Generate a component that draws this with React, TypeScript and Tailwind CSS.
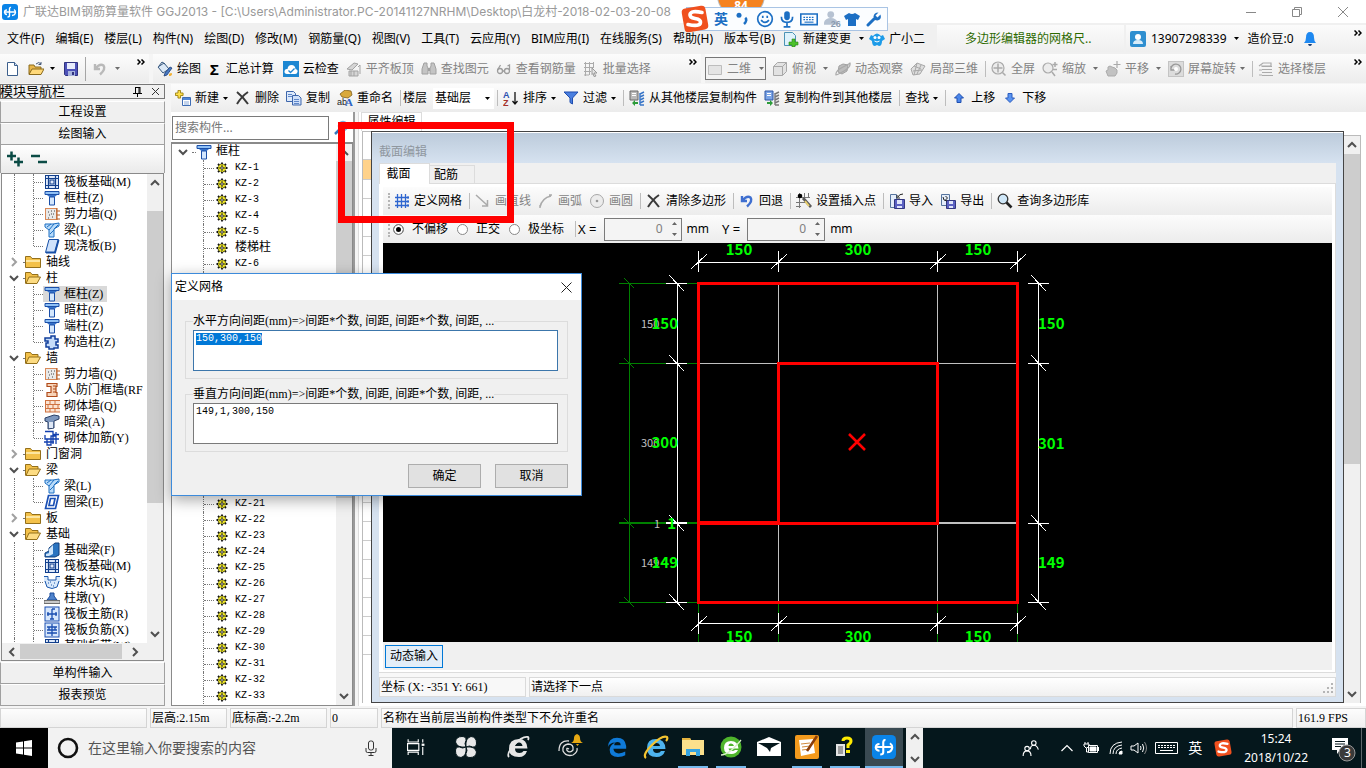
import { useState, type ReactNode } from "react";

const SONG = "font-['Liberation_Serif','Noto_Sans_CJK_SC',serif]";
const MONO = "font-['Liberation_Mono','Noto_Sans_CJK_SC',monospace]";

function Svg({
  children,
  size = 16,
  box = 16,
}: {
  children: ReactNode;
  size?: number;
  box?: number;
}) {
  return (
    <svg
      width={size}
      height={size}
      viewBox={`0 0 ${box} ${box}`}
      fill="none"
      className="shrink-0"
      aria-hidden="true"
    >
      {children}
    </svg>
  );
}

const icons: Record<string, ReactNode> = {
  logo: (
    <>
      <rect width="16" height="16" rx="3" fill="#0a84e8" />
      <path d="M2.500 8h11M9 3.500Q7.500 3 7.500 5v6.500q0 1.500-2 1.500M12 5.500q1.500 1 1.500 3-.5 3-3.500 3M5 6q-2.500 0-2.500 2.500Q3 10.500 5 10.500" stroke="#fff" strokeWidth="1.400" />
    </>
  ),
  file: (
    <>
      <path d="M2.500 1.500h7l3 3v10h-10z" fill="#fff" stroke="#3c5f8c" />
      <path d="M9.500 1.500v3h3" stroke="#3c5f8c" fill="#cfe0f5" />
    </>
  ),
  open: (
    <>
      <path d="M1 13V4h5l1 2h6v2" fill="#e8b64a" stroke="#8a6a1c" />
      <path d="M1 13.500L4 8h12l-3 5.500z" fill="#ffd97a" stroke="#8a6a1c" />
      <path d="M8 3q3-3 5 0m0-2v2.500h-2.500" stroke="#44597a" />
    </>
  ),
  save: (
    <>
      <path d="M1.500 1.500h13v13h-12l-1-1z" fill="#4d52b8" stroke="#30337f" />
      <path d="M4 2h8v6H4z" fill="#e7ecfb" />
      <path d="M5 10h7v5H5z" fill="#a8b4dd" />
      <path d="M9 11h2v3H9z" fill="#30337f" />
    </>
  ),
  undoGray: (
    <path d="M3 3v5h5M3.500 7.500Q8 2 11.500 4.500 14 8 8 13.500" stroke="#b9b9b9" strokeWidth="2.400" />
  ),
  undo: (
    <path d="M3 3v5h5M3.500 7.500Q8 2 11.500 4.500 14 8 8 13.500" stroke="#3f6fd0" strokeWidth="2.400" />
  ),
  paint: (
    <>
      <path d="M1 6l6-4 5 6-6 4z" fill="#dbe8f6" stroke="#35577f" />
      <path d="M2 5l3-4 3 2" stroke="#35577f" />
      <path d="M15 7l-5 7-3 1 1-3 5-6z" fill="#4679c4" stroke="#1f3f77" strokeWidth=".8" />
      <path d="M12 13q3-2 3 0t-3 2z" fill="#f2b134" />
    </>
  ),
  cloud: (
    <>
      <rect width="16" height="16" fill="#1d87d2" />
      <path d="M4 13q-3-.5-2.500-3Q2 7.500 4.500 8 5 4 8.500 4t4 4q2.500.5 2 3t-3 2z" fill="#fff" />
      <path d="M5.500 9.500l2 2 4-4" stroke="#1d87d2" strokeWidth="1.300" />
    </>
  ),
  flush: (
    <>
      <path d="M1 8l7-6 4 1-6 6zM3 10h9v5H3z" fill="#d5d5d5" stroke="#a3a3a3" />
      <path d="M5 10v5M8 10v5M12 6l2-2v9" stroke="#a3a3a3" />
    </>
  ),
  binoculars: (
    <>
      <path d="M3 2h3v3l1 2v6H1V8zM10 2h3l2 6v5H9V7l1-2z" fill="#c4c4c4" stroke="#a0a0a0" />
      <path d="M7 7h2v3H7z" fill="#a0a0a0" />
    </>
  ),
  glasses: (
    <>
      <circle cx="4" cy="10" r="2.500" stroke="#9c9c9c" strokeWidth="1.300" />
      <circle cx="11" cy="10" r="2.500" stroke="#9c9c9c" strokeWidth="1.300" />
      <path d="M6.500 10h2M1.500 9l3-5M13.500 9V4l-2 1" stroke="#9c9c9c" strokeWidth="1.300" />
    </>
  ),
  batch: (
    <>
      <path d="M1 2.500h10M1 6.500h10M1 10.500h7M1 14h5M2.500 1v14M6.500 1v13M10.500 1v6" stroke="#ababab" />
      <path d="M9 7l5 5h-3l2 3-2 .5-1-3-1 1z" fill="#e4e4e4" stroke="#999" />
    </>
  ),
  plate: <path d="M1.500 4.500h13v9h-13z" fill="#e4e4e4" stroke="#bdbdbd" />,
  cube: (
    <>
      <path d="M1.500 5.500l4-4h9v9l-4 4h-9z" fill="#e2e2e2" stroke="#a8a8a8" />
      <path d="M1.500 5.500h9v9M10.500 5.500l4-4" stroke="#a8a8a8" />
    </>
  ),
  orbit: (
    <>
      <path d="M4 5l4-2 5 1-1 6-5 3-4-2z" fill="#bdbdbd" stroke="#a1a1a1" />
      <path d="M1 14Q0 10 8 6t7-4q1 4-6 8t-8 4z" stroke="#a9a9a9" strokeWidth="1.200" />
    </>
  ),
  box3d: (
    <>
      <path d="M1 8l6-6 8 3-5 8-7 1z" fill="#dedede" stroke="#a8a8a8" />
      <path d="M4 5l7 3M3 10l9-1M7 2l-3 12M11 4L7 13" stroke="#a8a8a8" />
    </>
  ),
  fullscreen: (
    <>
      <circle cx="7" cy="7" r="6" fill="#ececec" stroke="#aaa" strokeWidth="1.200" />
      <path d="M7 2.500v9M2.500 7h9M11.500 11.500l3 3" stroke="#aaa" strokeWidth="1.500" />
    </>
  ),
  zoom: (
    <>
      <circle cx="6" cy="7" r="5" fill="#ececec" stroke="#aaa" strokeWidth="1.200" />
      <path d="M10 11l3 4M13 1v5M10.500 3.500h5M11 8.500h4" stroke="#aaa" strokeWidth="1.500" />
    </>
  ),
  pan: (
    <>
      <path d="M3 15l-2-5 2-1V6l2-1 2 1 3 1 2 2v3l-2 3z" fill="#c2c2c2" stroke="#ababab" />
      <path d="M12 0v7M8.500 3.500h7" stroke="#aaa" strokeWidth="1.200" />
    </>
  ),
  rotate: (
    <>
      <rect x=".5" y=".5" width="15" height="15" fill="#dcdcdc" stroke="#c4c4c4" />
      <path d="M3 9a5 5 0 1 1 4 4M3 5v4h4" stroke="#999" strokeWidth="1.300" />
      <circle cx="8" cy="8" r="2" fill="#fff" />
    </>
  ),
  floors: (
    <path d="M1 5l4-3h8v3H3M4 5.500h10M4 8.500h10M4 11.500h10M4 14.500h11M1 9h3M1 14h3" stroke="#ababab" strokeWidth="1.200" />
  ),
  create: (
    <>
      <path d="M3.500.5h3v3h3v3h-3v3h-3v-3h-3v-3h3z" transform="scale(.85)" fill="#ffe14d" stroke="#967a08" />
      <path d="M7.500 7.500h8v8h-8z" fill="#fff" stroke="#3f6db5" />
      <path d="M8 8h7v2H8z" fill="#4f86d8" />
      <path d="M9 12h5M9 14h5" stroke="#8aa9d8" />
    </>
  ),
  cross: (
    <path d="M2 2q6 5 11 12M13 2Q7 6 2 14" stroke="#3a3a3a" strokeWidth="2" />
  ),
  copy: (
    <>
      <path d="M.5 1.500h7l2 2v8h-9z" fill="#dce9fb" stroke="#3e66ab" />
      <path d="M6.500 5.500h6l2.500 2.500v7H6.500z" fill="#cfe0fa" stroke="#3e66ab" />
      <path d="M2 4.500h4M2 6.500h4M8 9.500h5M8 11.500h5M8 13.500h5" stroke="#5f87c9" />
    </>
  ),
  rename: (
    <>
      <path d="M3 4l5-4 6 1 1 4-4 3-6-1z" fill="#d9a93c" stroke="#80601a" strokeWidth=".8" />
      <text x="0" y="15" fontSize="9" fill="#222" fontFamily="Liberation Sans">ab</text>
      <text x="8" y="15.500" fontSize="11" fontWeight="700" fill="#2f64c4" fontFamily="Liberation Serif">A</text>
    </>
  ),
  sort: (
    <>
      <text x="0" y="8" fontSize="9" fontWeight="700" fill="#2b50b0" fontFamily="Liberation Sans">A</text>
      <text x="0" y="16" fontSize="9" fontWeight="700" fill="#a4312b" fontFamily="Liberation Sans">Z</text>
      <path d="M12 2v12M9.500 11l2.500 3 2.500-3" stroke="#111" strokeWidth="1.300" />
    </>
  ),
  filter: (
    <path d="M1 2h14L9.500 8v6L7 12.500V8z" fill="#4a7fe0" stroke="#1f4dae" />
  ),
  copyFrom: (
    <>
      <path d="M1 1h8v9H1z" fill="#b9b9b9" stroke="#6b6b6b" />
      <path d="M3 3.500h4M3 5.500h4" stroke="#fff" />
      <path d="M11 4l4-2M11 7l4-2M11 10l4-2M11 13l4-2M11 15h4M11 3v12" stroke="#3875c7" strokeWidth="1.400" />
      <path d="M3 13l3-3v2h3v2H6v2z" fill="#2c9c3a" />
    </>
  ),
  copyTo: (
    <>
      <path d="M1 1h8v9H1z" fill="#7aa4e6" stroke="#2e57a4" />
      <path d="M3 3.500h4M3 5.500h4" stroke="#fff" />
      <path d="M11 4l4-2M11 7l4-2M11 10l4-2M11 13l4-2M11 15h4M11 3v12" stroke="#777" strokeWidth="1.400" />
      <path d="M9 13l-3-3v2H3v2h3v2z" fill="#2c9c3a" />
    </>
  ),
  up: <path d="M8 3.500L12.500 8H10v4.500H6V8H3.500z" fill="#4a86ea" stroke="#1f4fb0" />,
  down: <path d="M8 12.500L12.500 8H10V3.500H6V8H3.500z" fill="#5a94f0" stroke="#2b5cc0" />,
  grid: (
    <>
      <path d="M1 4.500h14M1 8.500h14M1 12.500h14M3.500 1v14M7.500 1v14M11.500 1v14" stroke="#2f66cf" strokeWidth="1.300" />
      <path d="M14 3v3M14 7v3M14 11v3" stroke="#2f66cf" />
    </>
  ),
  line: <path d="M1 2l11 10M12.500 7v6H7" stroke="#aaa" strokeWidth="1.500" />,
  arc: <path d="M2 14Q4 5 13 3M2 12v3M11 2h3" stroke="#aaa" strokeWidth="1.500" />,
  circle: (
    <>
      <circle cx="8" cy="8" r="6.500" fill="#ececec" stroke="#a8a8a8" />
      <circle cx="8" cy="8" r="1.300" fill="#999" />
    </>
  ),
  insert: (
    <>
      <path d="M0 4.500h14M0 9.500h9M0 13.500h5M3.500 0v15M8.500 0v10M12.500 0v5" stroke="#777" />
      <circle cx="4" cy="3" r="2.300" fill="#000" />
      <path d="M7 5l8 9" stroke="#5a5a5a" strokeWidth="2.800" />
      <path d="M9 8l4 5" stroke="#e9cf6d" strokeWidth="2" />
    </>
  ),
  importDoc: (
    <>
      <path d="M1.500 1.500h6v13h-6z" fill="#e4edfa" stroke="#56749e" />
      <path d="M5.500 6.500h10v9h-10z" fill="#5b61c2" stroke="#32367f" />
      <path d="M8 7h5v4H8zM8 13h5v2H8z" fill="#dfe5fa" />
      <path d="M14 1q-4 0-5 3M8 2v3h3" stroke="#222" />
    </>
  ),
  exportDoc: (
    <>
      <path d="M1.500 1.500h8v11h-8z" fill="#e4edfa" stroke="#56749e" />
      <path d="M6.500 7.500h9v8h-9z" fill="#5b61c2" stroke="#32367f" />
      <path d="M9 8h4v3H9zM9 13h4v2H9z" fill="#dfe5fa" />
      <path d="M3 4q0 4 4 4M5.500 3l2 2-2 2" stroke="#222" />
    </>
  ),
  search: (
    <>
      <circle cx="6" cy="6" r="4.800" fill="#cfe7f8" stroke="#333" strokeWidth="1.300" />
      <path d="M9.500 9.500l5 5" stroke="#222" strokeWidth="2.600" />
    </>
  ),
  user: (
    <>
      <rect width="16" height="16" rx="2" fill="#2f8fd0" />
      <circle cx="8" cy="6" r="3" fill="#fff" />
      <path d="M3 13q0-4 5-4t5 4z" fill="#d8ecf9" />
    </>
  ),
  bell: (
    <>
      <path d="M8 1q4 0 4 5.500Q12 10 14 12H2q2-2 2-5.500Q4 1 8 1z" fill="#1e88f0" />
      <path d="M6 13h4q-.5 2-2 2t-2-2z" fill="#163b73" />
    </>
  ),
  change: (
    <>
      <path d="M1.500 1.500h8l3 3v10h-11z" fill="#dff2fb" stroke="#4c93b5" />
      <path d="M9 8h3v3h3v3h-3v2H9v-2H6v-3h3z" fill="#4cc02c" stroke="#2c8415" strokeWidth=".6" />
    </>
  ),
  mascot: (
    <>
      <path d="M2 4L0 8l3 2q0 5 3 5l2-1 2 1q3 0 3-5l3-2-2-4-2 1Q8 0 4 5z" fill="#1d9be8" />
      <circle cx="6" cy="6.500" r="1.500" fill="#fff" />
      <circle cx="10" cy="6.500" r="1.500" fill="#fff" />
      <path d="M5.500 10q2.500 2 5 0" stroke="#fff" />
    </>
  ),
  column: (
    <>
      <path d="M1 1.500h14v3H1z" fill="#8fc0f5" stroke="#1b4fa8" />
      <path d="M3 5h10l-2.500 2h-5z" fill="#3672c9" />
      <path d="M5.500 7h5v8h-5z" fill="#d4e7fd" stroke="#1b4fa8" />
    </>
  ),
  raft: (
    <>
      <rect x="1.500" y="1.500" width="13" height="13" fill="#dfeafb" stroke="#123f8c" />
      <path d="M4.500 1v14M11.500 1v14M1 4.500h14M1 11.500h14" stroke="#123f8c" strokeWidth="1.200" />
      <rect x="6" y="6" width="4" height="4" stroke="#123f8c" />
    </>
  ),
  shear: (
    <>
      <rect x="1.500" y="2.500" width="11" height="11" fill="#e9e9e9" stroke="#d98a5a" />
      <path d="M4 6h1M7 5h1M9 8h1M5 9h1M8 11h1M4 12h1M10 5h1M7 8h1" stroke="#444" />
      <path d="M13 2v12M13 5h3M13 9h3M13 13h3" stroke="#b55a22" />
    </>
  ),
  beam: (
    <>
      <path d="M1 2h8l6-1v3l-5 3v8H5V8L1 5z" fill="#b8dbfa" stroke="#1d6fc2" />
      <path d="M5 8l5-6M6 12l4-4M3 5l4-3M10 7l4-4" stroke="#1d6fc2" />
    </>
  ),
  slab: (
    <>
      <path d="M5 1.500h9.500L11 14.500H1.500z" fill="#cfe2fb" stroke="#174fa6" />
      <path d="M14.500 2L11 14.500H2" stroke="#174fa6" strokeWidth="2" />
    </>
  ),
  tie: (
    <path d="M4 4h3V2h4v3h3v3h-2v3h2v3h-4v1H5v-2H2V9h2V7H1V4z" fill="#c6dcfa" stroke="#123f9c" strokeWidth="1.500" />
  ),
  rfwall: (
    <path d="M3 1.500h10v3h-1v6h1v4H3v-4h4v-6H3zM9 4h3M9 7h3M9 10h3" fill="#f7d3b8" stroke="#b04c1b" strokeWidth="1.200" />
  ),
  brick: (
    <>
      <rect x="1" y="2" width="15" height="12" fill="#fbe4d3" />
      <path d="M1 2.500h15M1 6.500h15M1 10.500h15M1 14h15M1.500 2v12M6 2v4M11 2v4M4 6v4M9 6v4M14 6v4M6 10v4M11 10v4" stroke="#cf7240" />
    </>
  ),
  darkBeam: (
    <>
      <path d="M1 4l9-3 5 1v3l-5 2v7l-6 1V8L1 7z" fill="#7d97be" stroke="#2b3f66" />
      <path d="M5 8h4v6H5z" fill="#dfe8f6" />
    </>
  ),
  masonry: (
    <path d="M1 1.500h8v3h6M1 5v4h14M3 9v6h4V6h5v8M0 12h10M12 2v5M9 2v12" stroke="#123fae" strokeWidth="1.300" />
  ),
  ringBeam: (
    <path d="M4.500 1.500h10l-3 13h-10zM6.500 4.500h4.500l-1.500 7H5z" fill="#fff" stroke="#1b50b5" strokeWidth="1.700" />
  ),
  foundBeam: (
    <>
      <path d="M1 15v-4l4-2V6l6-5h4v12l-4 2z" fill="#2b74c0" stroke="#123f7c" />
      <path d="M5 7l4-4v9l-4 2zM2 12l3-1v3H2z" fill="#cfe6fb" />
    </>
  ),
  pit: (
    <>
      <path d="M0 2h4v4h8V2h4v5l-3 6q-5 3-10 0L0 7z" fill="#d9e9fb" />
      <path d="M0 2.500h4V6M16 2.500h-4V6M4 6h8M1 7l2 6q5 3 10 0l2-6M4 9h1M7 11h1M10 9h1M6 8h1M9 12h1" stroke="#1c58ad" />
    </>
  ),
  pier: (
    <>
      <path d="M6 3h4v3l3 4H3l3-4z" fill="#4f83cc" stroke="#1c4c9a" />
      <path d="M0 10.500h16v3H0z" fill="#c9c9c9" stroke="#6e6e6e" />
    </>
  ),
  mainBar: (
    <>
      <rect x="1" y="1" width="14" height="14" fill="#d7e7fc" stroke="#1a4eb0" />
      <path d="M3 8h10M8 3v10M4 6v4M12 6v4M6 13h4M8 3h3" stroke="#1a4eb0" strokeWidth="1.300" />
    </>
  ),
  negBar: (
    <>
      <rect x="1" y="1" width="14" height="14" fill="#d7e7fc" stroke="#1a4eb0" />
      <path d="M3 5h10M3 11h10M8 2v12M5 5v3M11 5v3M3 8h10" stroke="#1a4eb0" strokeWidth="1.300" />
    </>
  ),
  folder: (
    <>
      <path d="M.5 13.500v-11h5l1.500 2h8.500v9z" fill="#f3c14a" stroke="#94701b" />
      <path d="M1 6h14v2H1z" fill="#fde6a0" />
    </>
  ),
  folderOpen: (
    <>
      <path d="M.5 13.500v-11h5l1.500 2h6v3" fill="#f3c14a" stroke="#94701b" />
      <path d="M1 13.500L4 7h11.500L12 13.500z" fill="#fddc83" stroke="#94701b" />
    </>
  ),
  gear: (
    <>
      <path d="M8 2.500v11M2.500 8h11M4 4l8 8M12 4l-8 8" stroke="#111" strokeWidth="1.800" />
      <circle cx="8" cy="8" r="4" fill="#f0e820" stroke="#111" strokeDasharray="1 1" />
      <path d="M8 5v6M5 8h6" stroke="#333" />
      <circle cx="8" cy="8" r="1.200" fill="#fff" stroke="#222" strokeWidth=".8" />
    </>
  ),
};

function Icon({ name, size }: { name: string; size?: number }) {
  return <Svg size={size}>{icons[name]}</Svg>;
}

function Caret({ gray }: { gray?: boolean }) {
  return (
    <svg width="5" height="3" viewBox="0 0 5 3" className="shrink-0">
      <path d="M0 0h5L2.500 3z" fill={gray ? "#6d6d6d" : "#000"} />
    </svg>
  );
}

function Chevron({ dir, light }: { dir: "up" | "down" | "left" | "right"; light?: boolean }) {
  const paths = {
    up: "M1 7l4-4 4 4",
    down: "M1 3l4 4 4-4",
    left: "M7 1L3 5l4 4",
    right: "M3 1l4 4-4 4",
  };
  return (
    <svg width="10" height="10" viewBox="0 0 10 10" fill="none" className="shrink-0">
      <path d={paths[dir]} stroke={light ? "#a0a0a0" : "#505050"} strokeWidth="2" />
    </svg>
  );
}

function More() {
  return (
    <svg width="8" height="6" viewBox="0 0 8 6" fill="none" className="mt-[5px] shrink-0 self-start">
      <path d="M.5.5L3 3 .5 5.500M4.500.5L7 3 4.500 5.500" stroke="#000" strokeWidth="1.500" />
    </svg>
  );
}

function Sep() {
  return <span className="-mr-[2px] h-4 w-px shrink-0 bg-[#bdbdbd]" />;
}

function Tool({
  icon,
  label,
  caret,
  gray,
}: {
  icon?: string;
  label?: string;
  caret?: boolean;
  gray?: boolean;
}) {
  return (
    <button
      className={`flex shrink-0 items-center gap-1 whitespace-nowrap ${gray ? "text-[#838383]" : "text-black"}`}
      aria-label={label ?? icon}
    >
      {icon && <Icon name={icon} />}
      {label}
      {caret && <Caret gray={gray} />}
    </button>
  );
}

function ScrollBar({ before, thumb }: { before: string; thumb: string }) {
  return (
    <div className="flex w-4 shrink-0 flex-col items-center bg-[#f0f0f0]">
      <span className={`flex shrink-0 items-center justify-center ${before}`}>
        <Chevron dir="up" />
      </span>
      <span className={`w-full bg-[#cdcdcd] ${thumb}`} />
      <span className="flex-1" />
      <span className="pb-1">
        <Chevron dir="down" />
      </span>
    </div>
  );
}

const menus = [
  "文件(F)",
  "编辑(E)",
  "楼层(L)",
  "构件(N)",
  "绘图(D)",
  "修改(M)",
  "钢筋量(Q)",
  "视图(V)",
  "工具(T)",
  "云应用(Y)",
  "BIM应用(I)",
  "在线服务(S)",
  "帮助(H)",
  "版本号(B)",
];

function TitleBar() {
  return (
    <header className="flex h-[23px] shrink-0 items-center bg-white pl-[2px] text-[#999]">
      <Icon name="logo" />
      <h1 className="ml-[5px] min-w-0 flex-1 truncate font-['Inter','Noto_Sans_CJK_SC',sans-serif] text-[12px]">
        广联达BIM钢筋算量软件 GGJ2013 - [C:\Users\Administrator.PC-20141127NRHM\Desktop\白龙村-2018-02-03-20-08
      </h1>
      <button className="flex w-[46px] justify-center" aria-label="最小化">
        <svg width="10" height="10" fill="none" stroke="#888">
          <path d="M0 5.500h10" />
        </svg>
      </button>
      <button className="flex w-[46px] justify-center" aria-label="还原">
        <svg width="10" height="10" fill="none" stroke="#888">
          <path d="M.5 2.500h7v7h-7zM2.500 2.500v-2h7v7h-2" />
        </svg>
      </button>
      <button className="flex w-[46px] justify-center" aria-label="关闭">
        <svg width="10" height="10" fill="none" stroke="#888">
          <path d="M0 0l10 10M10 0L0 10" />
        </svg>
      </button>
    </header>
  );
}

function MenuBar() {
  return (
    <nav className="flex h-[31px] shrink-0 items-center bg-[#f0f0f0] pl-[7px]">
      <div className="flex min-w-0 flex-1 items-center overflow-hidden whitespace-nowrap">
        <div className="flex items-center gap-[11px]">
          {menus.map((m) => (
            <button key={m}>{m}</button>
          ))}
        </div>
        <button className="ml-2 flex items-center gap-1">
          <Icon name="change" />
          新建变更
        </button>
        <span className="ml-2" />
        <Caret />
        <button className="ml-[5px] flex items-center gap-1">
          <Icon name="mascot" />
          广小二
        </button>
      </div>
      <div className="mr-[2px] flex h-[27px] w-[187px] shrink-0 items-center bg-gradient-to-b from-[#fbfbfb] to-[#efefef] pl-[28px] text-[#2d6a00]">
        多边形编辑器的网格尺..
      </div>
      <div className="flex h-[27px] w-[240px] shrink-0 items-center bg-gradient-to-b from-[#fbfbfb] to-[#efefef] pr-1 pl-1">
        <Icon name="user" />
        <span className="mr-[7px] ml-[5px]">13907298339</span>
        <Caret />
        <span className="mr-[8px] ml-[9px]">造价豆:0</span>
        <Icon name="bell" />
        <span className="flex-1" />
        <More />
      </div>
    </nav>
  );
}

function MainToolbar() {
  const strip = "flex h-[29px] items-center bg-gradient-to-b from-[#fcfcfc] to-[#ececec]";
  return (
    <div className="flex h-[30px] shrink-0 items-start gap-1 overflow-hidden bg-[#f5f5f5]">
      <div className={`${strip} w-[149px] shrink-0 pr-1 pl-[5px]`}>
        <Tool icon="file" />
        <span className="w-[7px]" />
        <Tool icon="open" />
        <span className="w-[6px]" />
        <Caret />
        <span className="w-[8px]" />
        <Tool icon="save" />
        <span className="mx-[6px] h-6 w-px bg-[#a5a5a5]" />
        <Tool icon="undoGray" />
        <span className="w-[7px]" />
        <Caret gray />
        <span className="flex-1" />
        <More />
      </div>
      <div className={`${strip} min-w-0 flex-1 gap-[7px] pr-1 pl-1`}>
        <Tool icon="paint" label="绘图" />
        <button className="flex items-center gap-[7px] pl-[2px]">
          <span className="text-[15px] font-bold">Σ</span>汇总计算
        </button>
        <span className="-ml-[5px]" />
        <Tool icon="cloud" label="云检查" />
        <Tool icon="flush" label="平齐板顶" gray />
        <Tool icon="binoculars" label="查找图元" gray />
        <Tool icon="glasses" label="查看钢筋量" gray />
        <Tool icon="batch" label="批量选择" gray />
        <span className="flex-1" />
        <More />
      </div>
      <div className={`${strip} w-[661px] shrink-0 gap-[7px] pr-1`}>
        <button className="-mr-px flex h-[23px] w-[61px] items-center gap-1 border border-[#777] bg-[#f3f3f3] pl-px text-[#838383]">
          <Icon name="plate" />
          二维
          <span className="w-0" />
          <Caret gray />
        </button>
        <Tool icon="cube" label="俯视" gray />
        <Caret gray />
        <Tool icon="orbit" label="动态观察" gray />
        <Tool icon="box3d" label="局部三维" gray />
        <Sep />
        <Tool icon="fullscreen" label="全屏" gray />
        <Tool icon="zoom" label="缩放" gray />
        <Caret gray />
        <Tool icon="pan" label="平移" gray />
        <Caret gray />
        <Tool icon="rotate" label="屏幕旋转" caret gray />
        <Sep />
        <Tool icon="floors" label="选择楼层" gray />
        <span className="flex-1" />
        <More />
      </div>
    </div>
  );
}

function ComponentToolbar() {
  return (
    <div className="flex h-[28px] shrink-0 items-center gap-[7px] overflow-hidden bg-gradient-to-b from-[#fcfcfc] to-[#ececec] pl-1">
      <Tool icon="create" label="新建" caret />
      <Tool icon="cross" label="删除" />
      <Tool icon="copy" label="复制" />
      <Tool icon="rename" label="重命名" />
      <Sep />
      <label htmlFor="floor" className="-ml-[3px] shrink-0">
        楼层
      </label>
      <span className="-mr-1 -ml-px flex h-[21px] w-[61px] shrink-0 items-center bg-white pr-1 pl-[2px]">
        <select id="floor" className="min-w-0 flex-1 appearance-none outline-none">
          <option>基础层</option>
          <option>首层</option>
        </select>
        <Caret />
      </span>
      <Sep />
      <Tool icon="sort" label="排序" caret />
      <Tool icon="filter" label="过滤" caret />
      <Sep />
      <Tool icon="copyFrom" label="从其他楼层复制构件" />
      <Tool icon="copyTo" label="复制构件到其他楼层" />
      <Sep />
      <Tool label="查找" caret />
      <Sep />
      <Tool icon="up" label="上移" />
      <Tool icon="down" label="下移" />
    </div>
  );
}

type Node = { label: string; icon?: string; open?: boolean; last?: boolean };

const moduleTree: Node[] = [
  { label: "筏板基础(M)", icon: "raft" },
  { label: "框柱(Z)", icon: "column" },
  { label: "剪力墙(Q)", icon: "shear" },
  { label: "梁(L)", icon: "beam" },
  { label: "现浇板(B)", icon: "slab", last: true },
  { label: "轴线" },
  { label: "柱", open: true },
  { label: "框柱(Z)", icon: "column" },
  { label: "暗柱(Z)", icon: "column" },
  { label: "端柱(Z)", icon: "column" },
  { label: "构造柱(Z)", icon: "tie", last: true },
  { label: "墙", open: true },
  { label: "剪力墙(Q)", icon: "shear" },
  { label: "人防门框墙(RF", icon: "rfwall" },
  { label: "砌体墙(Q)", icon: "brick" },
  { label: "暗梁(A)", icon: "darkBeam" },
  { label: "砌体加筋(Y)", icon: "masonry", last: true },
  { label: "门窗洞" },
  { label: "梁", open: true },
  { label: "梁(L)", icon: "beam" },
  { label: "圈梁(E)", icon: "ringBeam", last: true },
  { label: "板" },
  { label: "基础", open: true },
  { label: "基础梁(F)", icon: "foundBeam" },
  { label: "筏板基础(M)", icon: "raft" },
  { label: "集水坑(K)", icon: "pit" },
  { label: "柱墩(Y)", icon: "pier" },
  { label: "筏板主筋(R)", icon: "mainBar" },
  { label: "筏板负筋(X)", icon: "negBar" },
  { label: "基础板带(W)", icon: "raft" },
];

function ModuleNode({
  node,
  selected,
  onSelect,
}: {
  node: Node;
  selected: boolean;
  onSelect: () => void;
}) {
  if (!node.icon) {
    return (
      <li className="flex h-4 items-center whitespace-nowrap pl-[7px]">
        <Chevron dir={node.open ? "down" : "right"} light={!node.open} />
        <span className="ml-1 w-[2px] border-t border-dotted border-[#777]" />
        <Icon name={node.open ? "folderOpen" : "folder"} />
        <button className="ml-[5px]">{node.label}</button>
      </li>
    );
  }
  return (
    <li className="flex h-4 items-center whitespace-nowrap pl-3">
      <span className="h-4 w-[19px] shrink-0 border-l border-dotted border-[#777]" />
      <span
        className={`w-px shrink-0 self-start border-l border-dotted border-[#777] ${node.last ? "h-2" : "h-4"}`}
      />
      <span className="w-[9px] shrink-0 border-t border-dotted border-[#777]" />
      <button
        onClick={onSelect}
        className={`flex h-4 items-center gap-1 pr-1 pl-px ${selected ? "bg-[#d9d9d9]" : ""}`}
      >
        <Icon name={node.icon} />
        {node.label}
      </button>
    </li>
  );
}

function ModulePanel() {
  const [selected, setSelected] = useState(7);
  const bar = "h-[22px] shrink-0 border border-[#a0a0a0] bg-[#f0f0f0] border-t-white";
  return (
    <aside className={`flex w-[165px] shrink-0 flex-col bg-[#f5f5f5] ${SONG}`}>
      <div className="flex h-[15px] shrink-0 items-center border border-[#777] bg-[#f0f0f0] pr-1 text-[13px] leading-[13px]">
        <h2 className="-ml-px flex-1">模块导航栏</h2>
        <svg width="9" height="10" fill="none" stroke="#000" className="mr-[9px]">
          <path d="M2 .5h5M2.500 0v6M6 0v6M7 0v6M0 6.500h9M4.500 6v4" />
        </svg>
        <svg width="9" height="9" fill="none" stroke="#333">
          <path d="M1 1l7 7M8 1L1 8" />
        </svg>
      </div>
      <button className={`mt-[2px] ${bar}`}>工程设置</button>
      <button className={bar}>绘图输入</button>
      <div className="flex h-[28px] shrink-0 items-center gap-2 border-x border-[#a0a0a0] bg-gradient-to-b from-white to-[#eaeaea] pl-[6px]">
        <svg width="16" height="16" fill="none" stroke="#0b4b45" strokeWidth="2.500">
          <path d="M0 5h9M4.500.5v9M7 11h9M11.500 6.500v9" />
        </svg>
        <svg width="16" height="16" fill="none" stroke="#0b4b45" strokeWidth="2.500">
          <path d="M0 5h9M7 11h9" />
        </svg>
      </div>
      <div className="mx-[1px] flex min-h-0 flex-1 flex-col border border-[#8a8a8a] bg-white">
        <div className="flex min-h-0 flex-1">
          <ul className="min-w-0 flex-1 overflow-hidden">
            {moduleTree.map((node, i) => (
              <ModuleNode
                key={i}
                node={node}
                selected={i === selected}
                onSelect={() => setSelected(i)}
              />
            ))}
          </ul>
          <ScrollBar before="h-[37px] items-start pt-1" thumb="h-[292px]" />
        </div>
        <div className="flex h-[17px] shrink-0 items-center bg-[#f0f0f0] pl-[5px]">
          <Chevron dir="left" />
          <span className="mr-2 ml-[3px] h-[15px] w-[102px] bg-[#cdcdcd]" />
          <Chevron dir="right" />
        </div>
      </div>
      <button className={`mt-[1px] ${bar}`}>单构件输入</button>
      <button className={bar}>报表预览</button>
    </aside>
  );
}

const components = [
  "KZ-1",
  "KZ-2",
  "KZ-3",
  "KZ-4",
  "KZ-5",
  "楼梯柱",
  ...Array.from({ length: 28 }, (_, i) => `KZ-${i + 6}`),
];

function ComponentPanel() {
  return (
    <section className="flex w-[184px] shrink-0 flex-col border-r-2 border-[#9a9a9a] bg-white">
      <div className="flex h-[30px] shrink-0 items-center gap-1 pt-px pl-px">
        <input
          type="text"
          placeholder="搜索构件..."
          aria-label="搜索构件"
          className="h-[24px] w-[157px] border border-[#7a7a7a] px-[2px] outline-none placeholder:text-[#777]"
        />
        <svg width="16" height="16" fill="none">
          <circle cx="10" cy="6" r="4.500" stroke="#79b0e4" strokeWidth="1.500" />
          <path d="M6.500 9.500L2 14" stroke="#3577bd" strokeWidth="2.500" />
        </svg>
      </div>
      <div className="flex min-h-0 flex-1 border border-t-2 border-[#8a8a8a]">
        <ul className={`min-w-0 flex-1 overflow-hidden text-[12px] ${MONO}`}>
          <li className="flex h-4 items-center pl-[6px]">
            <Chevron dir="down" />
            <span className="ml-1 w-[4px] border-t border-dotted border-[#777]" />
            <Icon name="column" />
            <span className="ml-1">框柱</span>
          </li>
          {components.map((name) => (
            <li key={name} className="flex h-4 items-center pl-[31px]">
              <span className="h-4 border-l border-dotted border-[#777]" />
              <span className="w-[10px] border-t border-dotted border-[#777]" />
              <Icon name="gear" />
              <button className={`ml-[5px] ${name.startsWith("KZ") ? "text-[10px]" : ""}`}>
                {name}
              </button>
            </li>
          ))}
        </ul>
        <ScrollBar before="h-[17px]" thumb="h-[337px]" />
      </div>
    </section>
  );
}

const xs = [698, 778, 937, 1017];
const ys = [283, 363, 523, 602];

// Section drawing: dimension chains around the column outline
function SectionCanvas() {
  const label = "Noto Sans CJK SC";
  return (
    <div className="min-h-0 flex-1 overflow-hidden bg-black">
      <svg width="100%" height="100%" fill="none">
        <g transform="translate(-383 -243)">
          <g shapeRendering="crispEdges">
            <g stroke="#008000">
              {ys.map((y) => (
                <path key={y} d={`M619 ${y + 0.5}H698M624 ${y - 5}l10 10`} />
              ))}
              <path d="M619 522.500H698M629.500 283V602" />
              {xs.map((x) => (
                <path key={x} d={`M${x + 0.5} 602V642`} />
              ))}
            </g>
            <path
              d="M778.500 283V602M937.500 283V602M698 363.500H1017M938 522.500H1017M938 523.500H1017"
              stroke="#c0c0c0"
            />
            <g stroke="#fff">
              <path d="M698 262.500H1017M698 623.500H1017M677.500 283V602M1038.500 283V602M666 522.500h21" />
              {xs.map((x) => (
                <path
                  key={x}
                  d={`M${x + 0.5} 251v21M${x - 7} 269l16-15M${x + 0.5} 613v21M${x - 7} 631l16-15`}
                />
              ))}
              {ys.map((y) => (
                <path
                  key={y}
                  d={`M666 ${y + 0.5}h21M669 ${y - 8}l15 16M1028 ${y + 0.5}h21M1031 ${y - 8}l15 16`}
                />
              ))}
            </g>
            <g stroke="#f00" strokeWidth="3">
              <path d="M698.500 283.500H1017.500V602.500H698.500zM778.500 363.500H937.500V523.500H778.500z" />
              <path d="M698 523h80" strokeWidth="4" />
            </g>
          </g>
          <path d="M849 434l16 16M865 434l-16 16" stroke="#f00" strokeWidth="2.500" />
          <g fill="#c0c0c0" fontSize="11" fontFamily={label}>
            <text x="641" y="328">150</text>
            <text x="641" y="447">300</text>
            <text x="654" y="528">1</text>
            <text x="641" y="567">149</text>
          </g>
          <g fill="#0f0" fontSize="15" fontWeight="700" fontFamily={label}>
            <g textAnchor="middle">
              <text x="739" y="255">150</text>
              <text x="858" y="255">300</text>
              <text x="978" y="255">150</text>
              <text x="739" y="642">150</text>
              <text x="858" y="642">300</text>
              <text x="978" y="642">150</text>
            </g>
            <g textAnchor="end">
              <text x="678" y="329">150</text>
              <text x="678" y="448">300</text>
              <text x="676" y="529">1</text>
              <text x="678" y="568">149</text>
            </g>
            <text x="1038" y="329">150</text>
            <text x="1038" y="449">301</text>
            <text x="1038" y="568">149</text>
          </g>
        </g>
      </svg>
    </div>
  );
}

function Grip() {
  return <span className="h-4 w-0 shrink-0 border-l-2 border-dotted border-[#b5b5b5]" />;
}

function Spin({ label }: { label: string }) {
  const id = `offset-${label}`;
  return (
    <>
      <label htmlFor={id} className="text-[13px]">
        {label} =
      </label>
      <span className="flex h-[23px] w-[78px] items-center border border-[#7a7a7a] bg-[#f4f4f4] pr-1 text-[#808080]">
        <input
          id={id}
          type="text"
          defaultValue="0"
          className="min-w-0 flex-1 pr-[9px] text-right outline-none"
        />
        <svg width="5" height="14" fill="#666">
          <path d="M0 3h5L2.500 0zM0 11h5l-2.500 3z" />
        </svg>
      </span>
      <span className="mr-[6px] -ml-[2px]">mm</span>
    </>
  );
}

function OffsetBar() {
  const [mode, setMode] = useState("不偏移");
  return (
    <div className="flex h-[28px] shrink-0 items-center gap-[7px] bg-gradient-to-b from-[#fcfcfc] to-[#ececec] pl-[5px]">
      <Grip />
      <div className="-ml-1 flex items-center gap-[9px] pr-[4px]">
        {["不偏移", "正交", "极坐标"].map((m) => (
          <label key={m} className="flex items-center gap-2">
            <input
              type="radio"
              name="offset"
              checked={mode === m}
              onChange={() => setMode(m)}
              className="size-[11px] appearance-none rounded-full border border-[#888] bg-white checked:bg-black checked:shadow-[inset_0_0_0_2px_white]"
            />
            {m}
          </label>
        ))}
      </div>
      <Sep />
      <span className="-ml-[10px]" />
      <Spin label="X" />
      <Spin label="Y" />
    </div>
  );
}

function SectionEditor() {
  return (
    <section className="flex min-w-0 flex-1 flex-col border border-[#444] bg-[#d6e2f0] px-[7px] pb-[5px]">
      <h2 className="-mx-[7px] flex h-[31px] shrink-0 items-center border-t border-white bg-gradient-to-b from-[#bccbdb] to-[#d6e2f0] pt-[8px] pl-[7px] text-[#8f979f]">
        截面编辑
      </h2>
      <div className={`flex h-[21px] shrink-0 items-end bg-[#f0f0f0] ${SONG}`}>
        <button className="h-[21px] w-[51px] border border-b-0 border-[#dcdcdc] bg-white pr-3">
          截面
        </button>
        <button className="h-[19px] w-[45px] border border-l-0 border-[#dcdcdc] bg-[#f0f0f0] pr-3">
          配筋
        </button>
        <span className="h-px flex-1 bg-[#dcdcdc]" />
      </div>
      <div className="flex min-h-0 flex-1 flex-col border-r border-b border-[#dcdcdc] bg-white pt-[3px] pr-[3px] pb-[2px] pl-1">
        <div className="flex h-[28px] shrink-0 items-center gap-[7px] overflow-hidden bg-gradient-to-b from-[#fcfcfc] to-[#ececec] pl-[5px]">
          <Grip />
          <span className="-ml-[10px]" />
          <Tool icon="grid" label="定义网格" />
          <Sep />
          <Tool icon="line" label="画直线" gray />
          <Tool icon="arc" label="画弧" gray />
          <Tool icon="circle" label="画圆" gray />
          <Sep />
          <Tool icon="cross" label="清除多边形" />
          <Sep />
          <Tool icon="undo" label="回退" />
          <Sep />
          <Tool icon="insert" label="设置插入点" />
          <Sep />
          <Tool icon="importDoc" label="导入" />
          <Tool icon="exportDoc" label="导出" />
          <Sep />
          <Tool icon="search" label="查询多边形库" />
        </div>
        <OffsetBar />
        <SectionCanvas />
        <div className="flex h-[28px] shrink-0 items-center bg-[#f0f0f0] pl-[2px]">
          <button className="h-[23px] w-[58px] border border-[#0078d7] bg-[#e3eef8]">动态输入</button>
        </div>
      </div>
      <div className={`flex h-[24px] shrink-0 items-end gap-[3px] bg-[#f8f8f8] ${SONG}`}>
        <span className="flex h-5 w-[147px] items-center border border-[#dadada] pl-px">
          坐标 (X: -351 Y: 661)
        </span>
        <span className="flex h-5 flex-1 items-center border border-[#dadada] bg-gradient-to-b from-white to-[#f0f0f0] pl-px">
          <span className="flex-1">请选择下一点</span>
          <svg width="12" height="12" fill="#b5b5b5" className="mt-1">
            <path d="M8 0h2v2H8zM8 4h2v2H8zM8 8h2v2H8zM4 4h2v2H4zM4 8h2v2H4zM0 8h2v2H0z" />
          </svg>
        </span>
      </div>
    </section>
  );
}

function PropertyPanel() {
  return (
    <div className="ml-[3px] flex min-w-0 flex-1 flex-col border-l border-[#dcdcdc] bg-white">
      <div className={`flex h-[19px] shrink-0 items-start pl-[2px] ${SONG}`}>
        <button className="h-[19px] w-[61px] border border-b-0 border-[#dcdcdc] bg-white">
          属性编辑
        </button>
      </div>
      <div className="mr-[5px] flex min-h-0 flex-1 pb-[3px] pl-[3px]">
        <div className="flex w-[9px] shrink-0 flex-col border-t border-l border-[#bbb]">
          <span className="h-7 border-b border-[#ccc]" />
          <span className="h-5 border-b border-[#ccc] bg-[#ffd28a]" />
          {Array.from({ length: 26 }, (_, i) => (
            <span key={i} className="h-[19px] shrink-0 border-b border-[#ccc] last:border-0" />
          ))}
        </div>
        <SectionEditor />
        <div className="mt-1 flex border-t border-r border-[#bbb]">
          <ScrollBar before="h-[18px]" thumb="h-[310px]" />
        </div>
      </div>
    </div>
  );
}

function GridDialog() {
  const box =
    "mt-px block h-[41px] w-full resize-none overflow-hidden border p-[2px] text-[10px] leading-[12px] outline-none selection:bg-[#0078d7] selection:text-white";
  return (
    <div
      role="dialog"
      aria-label="定义网格"
      className="absolute top-[273px] left-[171px] flex w-[411px] flex-col border border-[#3d8bdb] bg-[#f0f0f0] pb-[7px] shadow-[0_4px_14px_rgba(0,0,0,0.35)]"
    >
      <div className="flex h-[26px] items-center bg-white pr-[9px] pl-[3px]">
        <h2 className="flex-1">定义网格</h2>
        <button aria-label="关闭">
          <svg width="11" height="11" fill="none" stroke="#222">
            <path d="M.5.5l10 10M10.500.5l-10 10" />
          </svg>
        </button>
      </div>
      <div className={`flex flex-col px-[13px] pt-[13px] ${SONG}`}>
        <fieldset className="h-[66px] border border-[#dcdcdc] pr-[9px] pl-[7px]">
          <legend className="h-4 leading-4">
            <label htmlFor="horizontal">水平方向间距(mm)=&gt;间距*个数, 间距, 间距*个数, 间距, ...</label>
          </legend>
          <textarea
            id="horizontal"
            autoFocus
            onFocus={(e) => e.target.select()}
            defaultValue="150,300,150"
            spellCheck={false}
            className={`${box} border-[#3c76ab] bg-white ${MONO}`}
          />
        </fieldset>
        <fieldset className="mt-[7px] h-[66px] border border-[#dcdcdc] pr-[9px] pl-[7px]">
          <legend className="h-4 leading-4">
            <label htmlFor="vertical">垂直方向间距(mm)=&gt;间距*个数, 间距, 间距*个数, 间距, ...</label>
          </legend>
          <textarea
            id="vertical"
            defaultValue="149,1,300,150"
            spellCheck={false}
            className={`${box} border-[#7a7a7a] bg-white ${MONO}`}
          />
        </fieldset>
        <div className="mt-3 flex justify-end gap-[14px]">
          <button className="h-6 w-[73px] border border-[#adadad] bg-[#e1e1e1]">确定</button>
          <button className="h-6 w-[73px] border border-[#adadad] bg-[#e1e1e1]">取消</button>
        </div>
      </div>
    </div>
  );
}

function SogouMark({ size }: { size: number }) {
  return (
    <Svg size={size} box={28}>
      <rect x="2" y="2" width="24" height="24" rx="4" fill="#f0501e" transform="rotate(-10 14 14)" />
      <path
        d="M21 7.500Q10 5 9 9.500q-.5 3 5 4 6 1 5.500 4Q19 22 7 19.500"
        stroke="#fff"
        strokeWidth="3.600"
        strokeLinecap="round"
      />
    </Svg>
  );
}

function InputMethodBar() {
  return (
    <div className="absolute top-[5px] left-[681px] flex h-7 items-center">
      <div className="absolute -top-[33px] left-[37px] flex size-[46px] items-end justify-center rounded-full bg-[#f5821f] text-[12px] font-bold text-white ring-1 ring-[#bbb]">
        <span className="mb-[5px] leading-[14px]">84</span>
      </div>
      <div className="relative z-10 -mr-[23px]">
        <SogouMark size={28} />
      </div>
      <div className="relative flex h-[24px] w-[202px] items-center border border-[#a9c4e4] bg-[#fbfdff] pl-[27px] text-[#1c6fc4]">
        <span className="w-5 text-[14px] font-bold">英</span>
        <Svg size={20}>
          <circle cx="4" cy="5" r="2" fill="#1c6fc4" />
          <path d="M9 7q2 2-1 5" stroke="#1c6fc4" strokeWidth="2" />
        </Svg>
        <span className="w-[2px]" />
        <Svg size={18}>
          <circle cx="8" cy="8" r="6.500" stroke="#1c6fc4" strokeWidth="1.500" />
          <path d="M4.500 9q3.500 4 7 0M6 5v2M10 5v2" stroke="#1c6fc4" strokeWidth="1.500" />
        </Svg>
        <span className="w-1" />
        <Svg size={18}>
          <rect x="5.500" y="1" width="5" height="8" rx="2.500" fill="#1c6fc4" />
          <path d="M3 6q0 5 5 5t5-5M8 11v4M5 15h6" stroke="#1c6fc4" strokeWidth="1.500" />
        </Svg>
        <span className="w-1" />
        <Svg size={18}>
          <path d="M.7 3.500h14.600v9.500H.7z" stroke="#1c6fc4" strokeWidth="1.400" />
          <path d="M3 6.500h10M3 8.500h10" stroke="#1c6fc4" strokeDasharray="1.500 1" />
          <path d="M4 10.800h8" stroke="#1c6fc4" />
        </Svg>
        <span className="w-[6px]" />
        <Svg size={18}>
          <circle cx="6" cy="4" r="3" fill="#b6c2d2" />
          <path d="M0 11q1-4 6-4t6 4v2H0z" fill="#b6c2d2" />
          <text x="6" y="15" fontSize="8" fontWeight="700" fill="#8c9bb0" fontFamily="Liberation Sans">26</text>
        </Svg>
        <span className="w-[2px]" />
        <Svg size={16}>
          <path d="M5 2q3 2 6 0l5 3-2 4-2-1v7H4V8L2 9 0 5z" fill="#1c6fc4" />
        </Svg>
        <span className="w-[6px]" />
        <Svg size={16}>
          <path d="M2 14l6-6" stroke="#1c6fc4" strokeWidth="3" strokeLinecap="round" />
          <path d="M12.500 1.500L9.500 4.500l2 2 3-3q1.500 5-3 6-4 0-4-4 .5-4 5-4z" fill="#1c6fc4" />
        </Svg>
      </div>
    </div>
  );
}

function StatusBar() {
  const cell = "flex h-5 items-center border border-[#d4d4d4] bg-gradient-to-b from-[#fdfdfd] to-[#f0f0f0] pl-px";
  return (
    <footer className={`flex h-[22px] shrink-0 items-end gap-[3px] bg-[#f5f5f5] whitespace-nowrap ${SONG}`}>
      <span className={`${cell} w-[147px]`} />
      <span className={`${cell} w-[77px]`}>层高:2.15m</span>
      <span className={`${cell} w-[97px]`}>底标高:-2.2m</span>
      <span className={`${cell} w-[48px]`}>0</span>
      <span className={`${cell} flex-1`}>名称在当前层当前构件类型下不允许重名</span>
      <span className={`${cell} w-[70px]`}>161.9 FPS</span>
    </footer>
  );
}

function EdgeGlyph({ color }: { color: string }) {
  return (
    <Svg size={22} box={24}>
      <path
        d="M2 12Q3 2 12 2q9 0 10 9v3H8q1 5 6 5 4 0 7-2v4q-3 2-8 2-9 0-9-8 0-5 6-8Q4 7 2 12zM9 10h7q0-3.500-3.500-3.500T9 10z"
        fill={color}
        fillRule="evenodd"
      />
    </Svg>
  );
}

function TaskBar() {
  const app = "flex h-10 shrink-0 items-center justify-center border-b-2";
  return (
    <div className="flex h-10 shrink-0 items-center overflow-hidden bg-[#05171c] text-white">
      <button className="flex h-10 w-12 shrink-0 items-center justify-center bg-black" aria-label="开始">
        <Svg>
          <path d="M0 2.500l7-1v6H0zM8 1.300L16 0v7.500H8zM0 8.500h7v6l-7-1zM8 8.500h8V16l-8-1.300z" fill="#fff" />
        </Svg>
      </button>
      <label className="flex h-10 w-[344px] shrink-0 items-center bg-[#f2f2f2] px-[9px] text-[#555]">
        <Svg size={22} box={22}>
          <circle cx="11" cy="11" r="9" stroke="#111" strokeWidth="2.600" />
        </Svg>
        <input
          type="text"
          placeholder="在这里输入你要搜索的内容"
          className="ml-[9px] min-w-0 flex-1 text-[14px] outline-none placeholder:text-[#555]"
        />
        <span className="mr-1">
          <Svg size={16}>
            <rect x="5.500" y="1" width="5" height="9" rx="2" stroke="#333" />
            <path d="M3 8v3q0 1.500 1.500 1.500h7q1.500 0 1.500-1.500V8M8 12.500V15M5.500 15.500h5" stroke="#333" />
          </Svg>
        </span>
      </label>
      <button className={`${app} w-[48px] border-transparent`} aria-label="任务视图">
        <Svg size={18}>
          <path d="M1 1v2.500h9V1M1 15v-2.500h9V15M.5 5h10v6H.5zM14 1v3M14 8v7" stroke="#fff" />
          <path d="M13 5h2.500v2H13z" fill="#fff" />
        </Svg>
      </button>
      <button className={`${app} w-[52px] border-transparent`} aria-label="应用">
        <Svg size={24} box={24}>
          {[0, 90, 180, 270].map((a) => (
            <path
              key={a}
              d="M12 12Q3 13 1.500 7 2 1.500 8 1.500q4.500 0 4 4-2 3 0 6.500z"
              transform={`rotate(${a} 12 12)`}
              fill="#e8e8e8"
              stroke="#05171c"
              strokeWidth="1"
            />
          ))}
        </Svg>
      </button>
      <button className={`${app} w-[52px] border-transparent`} aria-label="浏览器">
        <Svg size={24} box={24}>
          <path
            d="M3 14Q3 4 13 4q8 0 8.500 9.500H9q0 4.500 4.500 4.500 3 0 4-2H21q-2 6-8 6Q3 22 3 14zM9 11h7.500q-.5-3.500-3.500-3.500T9 11z"
            fill="#e6e6e6"
            fillRule="evenodd"
          />
          <path d="M3 22Q0 19 8 10T22 2q1 1 0 3" stroke="#e6e6e6" strokeWidth="1.800" />
        </Svg>
      </button>
      <button className={`${app} w-[52px] border-transparent`} aria-label="音乐">
        <Svg size={28} box={28}>
          <path d="M13 16q-3-2-2 1.500 3 3 6-.5 1-6-5-6-6 1-5 7 3 6 10 4 5-3 4-7M3 18Q3 7 13 8" stroke="#ddd" strokeWidth="1.300" />
          <path d="M15 10q3-1 3-5 0-3 3-4 3 1 3 4 0 4 3 5zM20 11h3l-1.500 2z" fill="#e7a913" />
        </Svg>
      </button>
      <button className={`${app} w-[41px] border-transparent`} aria-label="Edge">
        <EdgeGlyph color="#0f7ad8" />
      </button>
      <button className={`${app} mr-[3px] w-[38px] border-transparent`} aria-label="IE">
        <Svg size={26} box={26}>
          <path
            d="M4 14Q4 5 13 5q9 0 9.500 10H10q0 4 4 4 3 0 4-2h4q-2 6-8.500 6Q4 23 4 14zM10 12h7q-.5-3-3.500-3T10 12z"
            fill="#4db3ee"
            fillRule="evenodd"
          />
          <path d="M3 24Q-1 21 9 11T24 3q1 2-1 4" stroke="#f4c431" strokeWidth="2.200" />
        </Svg>
      </button>
      <button className={`${app} mr-2 w-[30px] border-[#76b9ed]`} aria-label="文件资源管理器">
        <Svg size={22} box={22}>
          <path d="M0 2h8l1 2h13v15H0z" fill="#fbe08c" />
          <path d="M0 2h8l1 2H0z" fill="#e5b43f" />
          <path d="M4 20v-7h14v7h-4v-4H8v4z" fill="#35a4e2" />
        </Svg>
      </button>
      <button className={`${app} mr-2 w-[30px] border-[#76b9ed]`} aria-label="360">
        <Svg size={24} box={24}>
          <circle cx="12" cy="12" r="10.500" fill="#4fb52c" />
          <path
            d="M5 13Q5 6 12 6t7.500 7.500h-10q.5 2.500 3.500 2.500 2 0 3-1h3q-2 4-6.500 4Q5 19 5 13zM9.500 11h5.500q-.5-2.500-3-2.500T9.500 11z"
            fill="#fff"
            fillRule="evenodd"
          />
          <path d="M2 20Q10 20 22 5" stroke="#d8f0c8" strokeWidth="1.300" />
        </Svg>
      </button>
      <button className={`${app} mr-2 w-[30px] border-transparent`} aria-label="邮件">
        <Svg size={24} box={24}>
          <path d="M0 7l12-5 12 5v14H0z" fill="#fff" />
          <path d="M1 8h22l-9 5-1 4-3-4z" fill="#05171c" />
        </Svg>
      </button>
      <button className={`${app} mr-2 w-[30px] border-[#76b9ed]`} aria-label="便笺">
        <Svg size={24} box={24}>
          <rect width="24" height="24" rx="2" fill="#f39a1d" />
          <path d="M4 5l14-1 2 14-14 3z" fill="#fff" />
          <path d="M6 9l9-1M7 12l8-1M7 15l8-1" stroke="#d08a3d" />
          <path d="M22 1L12 16" stroke="#8a3d0a" strokeWidth="2.500" />
        </Svg>
      </button>
      <button className={`${app} mr-[5px] w-[30px] border-[#76b9ed]`} aria-label="帮助">
        <Svg size={22} box={22}>
          <path d="M2 8h9v12H2z" fill="#e5e5e5" />
          <path d="M4 11h5M4 13h5M4 15h5M4 17h5" stroke="#555" />
          <path d="M9 5q0-3 4-3t4 3q0 2-3 4v3" stroke="#ffeb00" strokeWidth="3" />
          <path d="M12 14h4v3h-4z" fill="#ffeb00" />
        </Svg>
      </button>
      <button className={`${app} w-[38px] border-[#76b9ed] bg-[#3a4a52]`} aria-label="广联达">
        <Icon name="logo" size={24} />
      </button>
      <div className="ml-[3px] flex h-10 w-[17px] shrink-0 flex-col items-center justify-between bg-[#f0f0f0] py-1">
        <Chevron dir="up" />
        <Chevron dir="down" />
      </div>
      <span className="flex-1" />
      <div className="flex shrink-0 items-center">
        <Svg size={18}>
          <circle cx="10.500" cy="3.500" r="2" stroke="#fff" />
          <path d="M7.500 9q0-3.500 3-3.500t4 4" stroke="#fff" />
          <circle cx="4.500" cy="8.500" r="2" stroke="#fff" />
          <path d="M1 15q0-4.500 3.500-4.500T8 15" stroke="#fff" />
        </Svg>
        <svg width="14" height="8" fill="none" stroke="#fff" className="ml-[20px]">
          <path d="M1.500 7L7 1.500 12.500 7" strokeWidth="1.200" />
        </svg>
        <svg width="17" height="14" fill="none" stroke="#fff" className="ml-[9px]">
          <path d="M5.500 4.500h9v7h-9zM15.500 6v4" />
          <path d="M7 6h6v4H7z" fill="#fff" />
          <path d="M1 3h5v2L4 7H3L1 5zM2 1v2M5 1v2M3.500 7v4h2" />
        </svg>
        <svg width="14" height="14" fill="none" stroke="#fff" className="ml-[9px]">
          <path d="M1 13Q1 2 13 1M4 13q0-8 9-9M7 13q0-5 6-6" />
          <path d="M10 13q0-3 3-3v3z" fill="#fff" />
        </svg>
        <svg width="18" height="16" fill="none" stroke="#fff" className="ml-[7px]">
          <path d="M1 6v4h3l4 3V3L4 6zM10.500 6q1 2 0 4M12.500 4q2.500 4 0 8" />
          <path d="M14.500 2q4 6 0 12" stroke="#888" />
        </svg>
        <svg width="23" height="14" fill="none" stroke="#fff" className="ml-[7px]">
          <path d="M.5 1.500h22v11H.5z" />
          <path d="M3 4.500h17M3 6.500h17" strokeDasharray="2 1" />
          <path d="M5 9.500h13" />
        </svg>
        <span className="ml-[10px] text-[14px]">英</span>
        <span className="ml-[12px]">
          <SogouMark size={18} />
        </span>
        <div className="ml-[12px] text-center text-[12px] leading-[19px]">
          <div>15:24</div>
          <div>2018/10/22</div>
        </div>
        <svg width="26" height="26" fill="none" className="mt-1 ml-[23px]">
          <path d="M1 1h16v12H9l-3 4v-4H1z" fill="#fff" />
          <path d="M4 4.500h10M4 7h10M4 9.500h6" stroke="#05171c" />
          <circle cx="16" cy="16" r="8" fill="#3a3a3a" stroke="#999" />
          <text x="13" y="20" fontSize="12" fill="#fff" fontFamily="Noto Sans">3</text>
        </svg>
        <span className="mr-1 ml-1 h-10 w-px bg-[#5d686c]" />
      </div>
    </div>
  );
}

export default function App() {
  return (
    <div className="relative flex h-screen flex-col overflow-hidden bg-[#f5f5f5] font-['Noto_Sans','Noto_Sans_CJK_SC',sans-serif] text-[12px] leading-4 text-black">
      <TitleBar />
      <MenuBar />
      <MainToolbar />
      <main className="flex min-h-0 flex-1 gap-[6px]">
        <ModulePanel />
        <div className="flex min-w-0 flex-1 flex-col">
          <ComponentToolbar />
          <div className="flex min-h-0 flex-1">
            <ComponentPanel />
            <PropertyPanel />
          </div>
        </div>
      </main>
      <StatusBar />
      <TaskBar />
      <GridDialog />
      <div className="pointer-events-none absolute top-[122px] left-[338px] h-[101px] w-[176px] border-[7px] border-[#f00]" />
      <InputMethodBar />
    </div>
  );
}
